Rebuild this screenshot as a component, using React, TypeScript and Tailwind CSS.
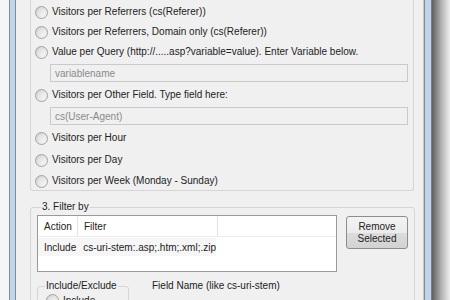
import React from "react";

const font = { fontFamily: '"Liberation Sans", Arial, sans-serif' };

function Radio() {
  return (
    <span className="w-[13px] h-[13px] shrink-0 rounded-full border border-[#a2a2a2] bg-gradient-to-br from-[#cfcfcf] to-[#fafafa] flex items-center justify-center">
      <span className="w-[7px] h-[7px] rounded-full bg-gradient-to-br from-[#dedede] to-[#f6f6f6]" />
    </span>
  );
}

function Option({ label, className = "" }: { label: string; className?: string }) {
  return (
    <div className={`flex items-center h-[20px] pl-[4px] gap-[4px] ${className}`}>
      <Radio />
      <span className="text-[10px] leading-[12px] text-[#222] whitespace-nowrap">{label}</span>
    </div>
  );
}

function Field({ value, className = "" }: { value: string; className?: string }) {
  return (
    <div
      className={`ml-[19px] mr-[5px] h-[18px] border border-[#c9c9c9] bg-[#f0f0f0] flex items-center px-[4px] text-[10px] text-[#8a8a8a] ${className}`}
    >
      {value}
    </div>
  );
}

export default function App() {
  return (
    <div className="w-[450px] h-[300px] overflow-hidden flex bg-white" style={font}>
      {/* left window frame */}
      <div className="w-[9px] bg-[#f4f5f6]" />
      <div className="w-[7px] border-x border-[#8a8a8a] bg-[#bfd5ee]" />

      {/* client area */}
      <div className="w-[407px] bg-[#f0f0f0] pl-[14px] pr-[9px]">
        {/* output options group (top cut off) */}
        <div className="border-x border-b border-[#d5d5d5] rounded-b-[3px] pt-[2px] h-[191px]">
          <Option label="Visitors per Referrers (cs(Referer))" />
          <Option label="Visitors per Referrers, Domain only (cs(Referer))" />
          <Option label="Value per Query (http://.....asp?variable=value). Enter Variable below." />
          <Field value="variablename" className="mt-[2px]" />
          <Option label="Visitors per Other Field. Type field here:" className="mt-[3px]" />
          <Field value="cs(User-Agent)" className="mt-[2px]" />
          <Option label="Visitors per Hour" className="mt-[3px]" />
          <Option label="Visitors per Day" className="mt-[2px]" />
          <Option label="Visitors per Week (Monday - Sunday)" className="mt-[1px]" />
        </div>

        {/* filter group */}
        <fieldset className="mt-[10px] border border-[#d5d5d5] rounded-[3px] px-[6px] pb-[20px]">
          <legend className="ml-[4px] px-[1px] text-[10px] leading-[12px] text-[#222]">3. Filter by</legend>
          <div className="flex gap-[9px] mt-[2px]">
            <div className="w-[300px] h-[57px] border border-[#9a9a9a] bg-white text-[10px] text-[#222]">
              <div className="flex h-[21px] border-b border-[#ececec] items-center">
                <div className="w-[40px] pl-[6px] border-r border-[#e2e2e2] h-full flex items-center">Action</div>
                <div className="w-[140px] pl-[6px] border-r border-[#e2e2e2] h-full flex items-center">Filter</div>
              </div>
              <div className="flex h-[18px] items-center mt-[1px] w-[178px] bg-[#f6f6f6] whitespace-nowrap">
                <div className="w-[40px] pl-[6px]">Include</div>
                <div className="pl-[6px]">cs-uri-stem:.asp;.htm;.xml;.zip</div>
              </div>
            </div>
            <button className="w-[62px] h-[33px] mt-[1px] border border-[#8c8c8c] rounded-[3px] bg-[linear-gradient(to_bottom,#f3f3f3_0%,#ebebeb_50%,#dddddd_50%,#d2d2d2_100%)] text-[10px] leading-[12px] text-[#222]">
              Remove
              <br />
              Selected
            </button>
          </div>
          <div className="flex mt-[8px]">
            <fieldset className="w-[92px] h-[40px] border border-[#d5d5d5] rounded-[3px]">
              <legend className="ml-[7px] px-[1px] text-[10px] leading-[12px] text-[#222]">Include/Exclude</legend>
              <div className="pl-[8px] pt-[2px] flex items-center gap-[4px]">
                <Radio />
                <span className="text-[10px] leading-[12px] text-[#222]">Include</span>
              </div>
            </fieldset>
            <div className="ml-[23px] text-[10px] leading-[12px] text-[#222]">Field Name (like cs-uri-stem)</div>
          </div>
        </fieldset>
      </div>

      {/* right window frame + shadow */}
      <div className="w-[9px] border-l border-[#c8c8c8] flex">
        <div className="w-[1px] bg-[#8a8a8a]" />
        <div className="w-[6px] bg-[#bfd5ee]" />
        <div className="w-[1px] bg-[#7a7a7a]" />
      </div>
      <div className="flex-1 bg-gradient-to-r from-[#5f5f5f] via-[#b0b0b0] to-[#efefef]" />
    </div>
  );
}
